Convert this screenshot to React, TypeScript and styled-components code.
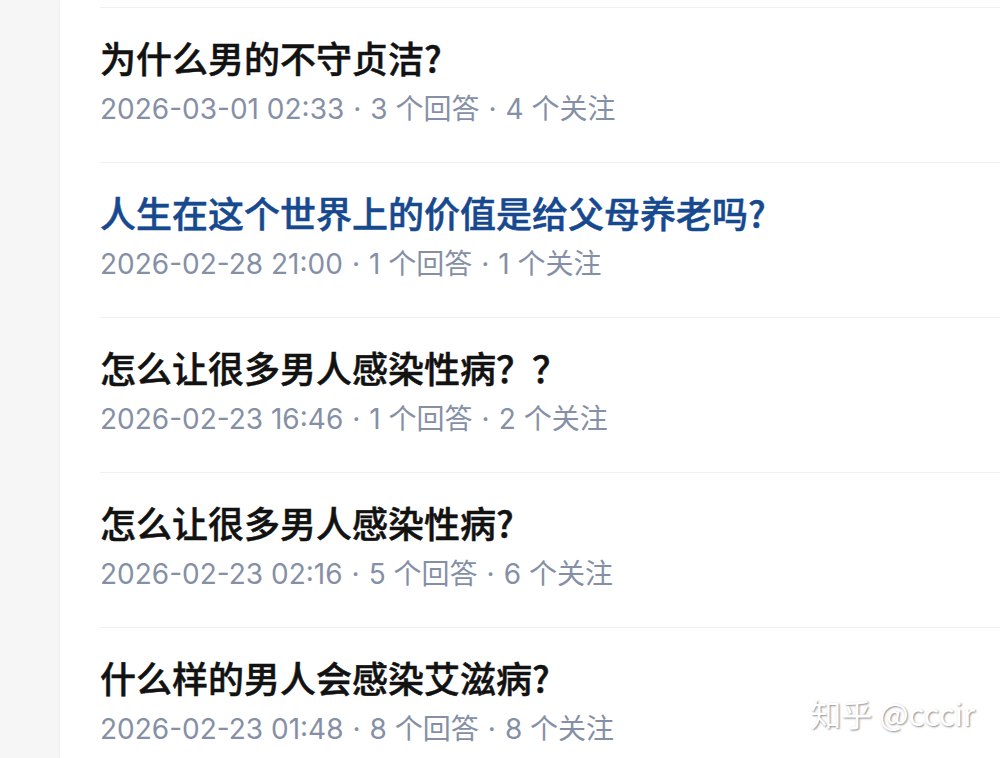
import React from "react";
import styled, { createGlobalStyle } from "styled-components";

const GlobalStyle = createGlobalStyle`
  html, body {
    margin: 0;
    padding: 0;
    background: #f6f6f6;
  }
  body {
    font-family: "Inter", "Noto Sans CJK SC", sans-serif;
  }
`;

const Page = styled.div`
  position: relative;
  display: flex;
  width: 1000px;
  height: 758px;
  overflow: hidden;
`;

const Gutter = styled.div`
  width: 60px;
  flex-shrink: 0;
  background: #f6f6f6;
`;

const Card = styled.div`
  flex: 1;
  background: #fff;
  padding: 7px 0 0 40px;
  box-shadow: 0 0 3px rgba(0, 0, 0, 0.06);
`;

const Item = styled.div`
  height: 155px;
  box-sizing: border-box;
  border-top: 1px solid #f0f0f2;
  padding-top: 27px;
`;

const Title = styled.div<{ visited?: boolean }>`
  font-family: "Noto Sans CJK SC", sans-serif;
  font-size: 36px;
  line-height: 44px;
  font-weight: 500;
  -webkit-text-stroke: 0.5px currentColor;
  color: ${(p) => (p.visited ? "#17498f" : "#121212")};
`;

const Meta = styled.div`
  margin-top: 13px;
  font-size: 28px;
  line-height: 34px;
  color: #8590a6;
`;

const Dot = styled.span`
  margin: 0 9px;
`;

const Watermark = styled.div`
  position: absolute;
  right: 25px;
  bottom: 23px;
  font-family: "Noto Sans CJK SC", sans-serif;
  font-size: 31px;
  color: #ffffff;
  text-shadow: 1px 1px 2px rgba(0, 0, 0, 0.45);
`;

interface Question {
  title: string;
  time: string;
  answers: number;
  follows: number;
  visited?: boolean;
}

const questions: Question[] = [
  { title: "为什么男的不守贞洁?", time: "2026-03-01 02:33", answers: 3, follows: 4 },
  {
    title: "人生在这个世界上的价值是给父母养老吗?",
    time: "2026-02-28 21:00",
    answers: 1,
    follows: 1,
    visited: true,
  },
  { title: "怎么让很多男人感染性病？？", time: "2026-02-23 16:46", answers: 1, follows: 2 },
  { title: "怎么让很多男人感染性病?", time: "2026-02-23 02:16", answers: 5, follows: 6 },
  { title: "什么样的男人会感染艾滋病?", time: "2026-02-23 01:48", answers: 8, follows: 8 },
];

const App = () => {
  return (
    <Page>
      <GlobalStyle />
      <Gutter />
      <Card>
        {questions.map((q) => (
          <Item key={q.title + q.time}>
            <Title visited={q.visited}>{q.title}</Title>
            <Meta>
              {q.time}
              <Dot>·</Dot>
              {q.answers} 个回答
              <Dot>·</Dot>
              {q.follows} 个关注
            </Meta>
          </Item>
        ))}
      </Card>
      <Watermark>知乎 @cccir</Watermark>
    </Page>
  );
};

export default App;
